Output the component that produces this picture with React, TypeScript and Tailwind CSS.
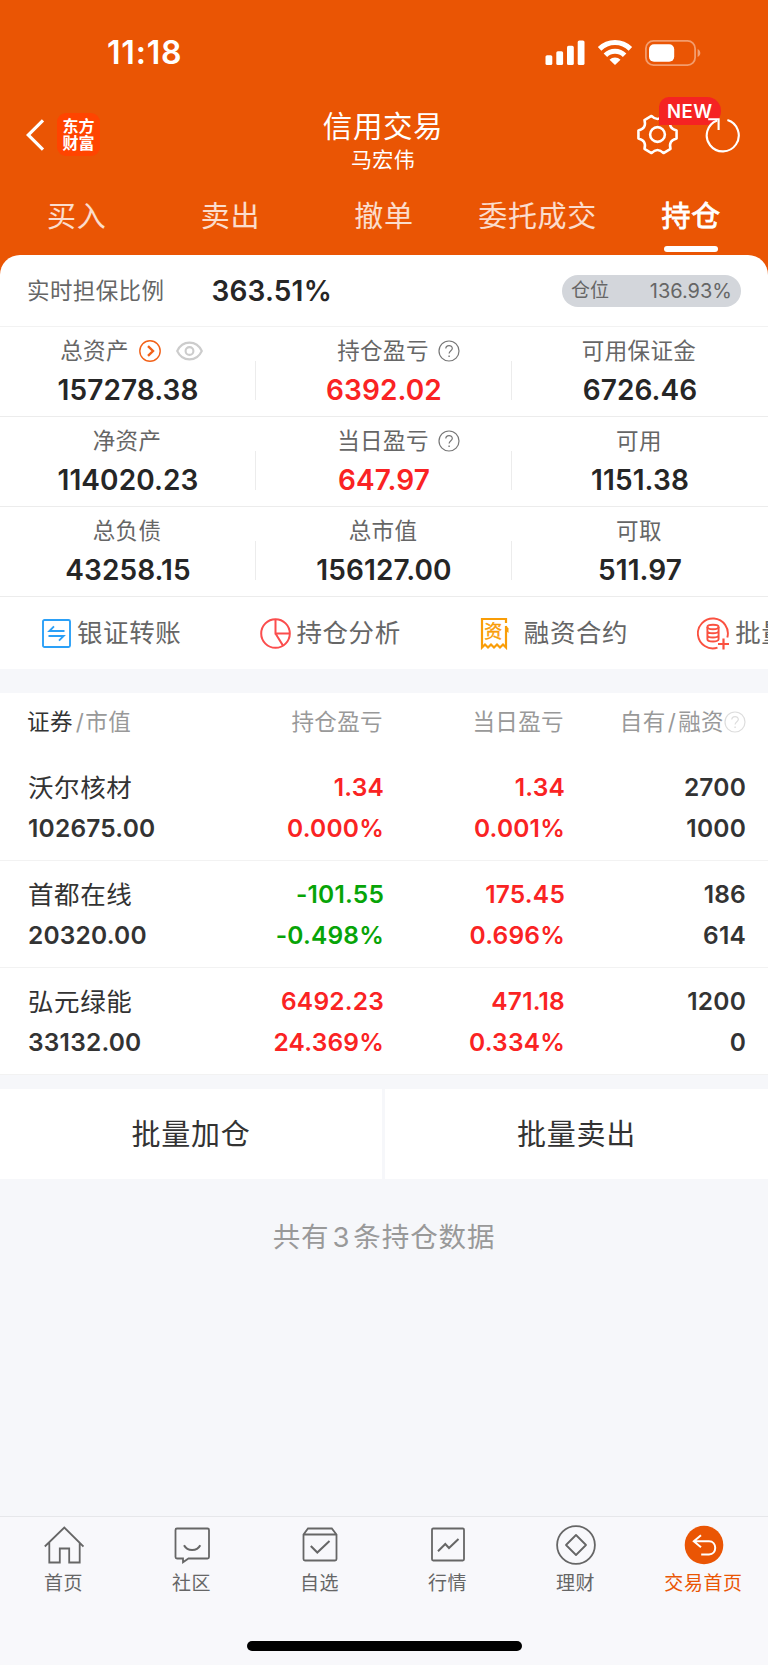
import clsx from "clsx"
import type { ReactNode } from "react"

const tabs = ["买入", "卖出", "撤单", "委托成交", "持仓"]

const summary = [
  [
    { label: "总资产", value: "157278.38", extra: "asset" },
    { label: "持仓盈亏", value: "6392.02", extra: "help", red: true },
    { label: "可用保证金", value: "6726.46" },
  ],
  [
    { label: "净资产", value: "114020.23" },
    { label: "当日盈亏", value: "647.97", extra: "help", red: true },
    { label: "可用", value: "1151.38" },
  ],
  [
    { label: "总负债", value: "43258.15" },
    { label: "总市值", value: "156127.00" },
    { label: "可取", value: "511.97" },
  ],
]

const holdings = [
  { name: "沃尔核材", value: "102675.00", profit: "1.34", profitRate: "0.000%", day: "1.34", dayRate: "0.001%", own: "2700", margin: "1000" },
  { name: "首都在线", value: "20320.00", profit: "-101.55", profitRate: "-0.498%", day: "175.45", dayRate: "0.696%", own: "186", margin: "614" },
  { name: "弘元绿能", value: "33132.00", profit: "6492.23", profitRate: "24.369%", day: "471.18", dayRate: "0.334%", own: "1200", margin: "0" },
]

function HelpIcon({ className }: { className?: string }) {
  return (
    <svg className={clsx("size-[22px] shrink-0", className)} viewBox="0 0 22 22" fill="none" stroke="currentColor" strokeWidth="1.2">
      <circle cx="11" cy="11" r="10" />
      <path d="M7.8 8.6c0-4 6.5-4 6.5-.2 0 2.3-3.2 2.3-3.2 5.2" />
      <path d="M11.1 15.4v1.5" strokeWidth="1.4" />
    </svg>
  )
}

function StatusBar() {
  return (
    <div className="flex h-[105px] items-center justify-between pr-[67px] pl-[107px]">
      <span className="text-[32px] font-semibold tracking-[0.8px]">11:18</span>
      <div className="flex items-center">
        <svg className="h-[26px] w-[40px]" viewBox="0 0 40 26" fill="currentColor">
          <rect x="0.5" y="15.2" width="6.8" height="9.8" rx="1.6" />
          <rect x="11.3" y="11.2" width="6.8" height="13.8" rx="1.6" />
          <rect x="22" y="5.8" width="6.8" height="19.2" rx="1.6" />
          <rect x="32.7" y="0.5" width="6.8" height="24.5" rx="1.6" />
        </svg>
        <svg className="ml-3 h-[26px] w-[36px]" viewBox="0 0 36 26" fill="none" stroke="currentColor" strokeWidth="5">
          <path d="M2.6 8.9a22 22 0 0 1 30.8 0" />
          <path d="M8.4 15.2a13.6 13.6 0 0 1 19.2 0" />
          <path d="M18 25l-5.5-5.2a7.6 7.6 0 0 1 11 0z" fill="currentColor" stroke="none" />
        </svg>
        <svg className="ml-3 h-[26px] w-[56px]" viewBox="0 0 56 26" fill="none">
          <rect x="0.9" y="0.9" width="49.2" height="24.2" rx="7.6" stroke="currentColor" strokeOpacity="0.42" strokeWidth="1.8" />
          <rect x="4" y="4.2" width="25.2" height="17.6" rx="5" fill="currentColor" />
          <path d="M52.6 8.9c3.6 1.7 3.6 6.5 0 8.2z" fill="currentColor" fillOpacity="0.45" />
        </svg>
      </div>
    </div>
  )
}

function TitleBar() {
  return (
    <div className="flex h-[75px] items-start">
      <div className="flex w-[255px] items-center pt-[8px] pl-[26px]">
        <svg className="h-[32px] w-[19px]" viewBox="0 0 19 32" fill="none" stroke="currentColor" strokeWidth="3.2">
          <path d="M17 1.4L2.2 16 17 30.6" />
        </svg>
        <div className="ml-3 flex size-[43px] flex-col items-center justify-center rounded-[9px] bg-[#ff4400] text-[16px] leading-[17px] font-bold">
          <span>东方</span>
          <span>财富</span>
        </div>
      </div>
      <div className="flex flex-1 flex-col items-center pt-px">
        <span className="text-[29.5px] leading-[40px] tracking-[0.6px]">信用交易</span>
        <span className="text-[21px] leading-[27px] tracking-[0.4px]">马宏伟</span>
      </div>
      <div className="flex w-[257px] items-center justify-end pt-[9px] pr-[27px]">
        <div className="relative">
          <svg className="size-[41px]" viewBox="0 0 40 40" fill="none" stroke="currentColor" strokeWidth="2.5" strokeLinejoin="round">
            <path d="M38.6 16.05V23.95Q30.4 26 32.7 34.1L25.9 38.1Q20 32 14.1 38.1L7.3 34.1Q9.6 26 1.4 23.95V16.05Q9.6 14 7.3 5.9L14.1 1.9Q20 8 25.9 1.9L32.7 5.9Q30.4 14 38.6 16.05Z" />
            <circle cx="20" cy="20" r="7.2" />
          </svg>
          <span className="absolute bottom-[30px] left-[22px] h-[28px] w-[62px] rounded-tl-[10px] rounded-r-[14px] bg-[#f52323] pl-[8px] text-[18.5px] leading-[28px] font-semibold tracking-[0.5px]">
            NEW
          </span>
        </div>
        <svg className="relative ml-[27px] h-[36px] w-[36px]" viewBox="0 0 36 36" fill="none" stroke="currentColor" strokeWidth="2.1">
          <path d="M22.4 3.1A16 16 0 1 1 12.2 3.4" />
          <path d="M3.2 2.2H13.6V13" />
        </svg>
      </div>
    </div>
  )
}

function Header() {
  return (
    <header className="h-[275px] bg-[#ea5504] text-white">
      <StatusBar />
      <TitleBar />
      <nav className="grid grid-cols-5">
        {tabs.map((tab) => {
          const active = tab === "持仓"
          return (
            <div key={tab} className="flex flex-col items-center pt-[7px]">
              <span
                className={clsx(
                  "text-[29px] leading-[59px] tracking-[0.7px]",
                  active ? "[-webkit-text-stroke:0.8px_white]" : "text-white/80"
                )}
              >
                {tab}
              </span>
              {active && <span className="h-[6px] w-[54px] rounded-full bg-white" />}
            </div>
          )
        })}
      </nav>
    </header>
  )
}

function Summary() {
  return (
    <section className="-mt-5 rounded-t-[20px] bg-white">
      <div className="flex h-[72px] items-center border-b border-[#f2f2f2] pr-[27px] pl-[27px]">
        <span className="text-[22.5px] tracking-[0.4px] text-[#666]">实时担保比例</span>
        <span className="ml-[47px] text-[28px] font-semibold tracking-[0.2px] text-[#262626]">363.51%</span>
        <div className="ml-auto flex h-[32px] w-[179px] items-center justify-between rounded-full bg-[#d3d6db] pr-[9px] pl-[9px] text-[#666]">
          <span className="pt-px text-[19px]">仓位</span>
          <span className="text-[20px]">136.93%</span>
        </div>
      </div>
      {summary.map((row, i) => (
        <div key={i} className="grid h-[90px] grid-cols-3 border-b border-[#ececec]">
          {row.map((cell, j) => (
            <div key={cell.label} className="relative flex flex-col items-center pt-[6px]">
              <div
                className={clsx(
                  "flex h-[36px] items-center pr-[2px] text-[22.5px] tracking-[0.4px] text-[#666]",
                  cell.extra === "asset" && "pl-[9px]"
                )}
              >
                <span>{cell.label}</span>
                {cell.extra === "asset" && (
                  <>
                    <svg className="ml-[10px] size-[22px]" viewBox="0 0 22 22" fill="none" stroke="#f26118">
                      <circle cx="11" cy="11" r="10.2" strokeWidth="1.4" />
                      <path d="M9 6.2l5 4.8-5 4.8" strokeWidth="2.4" />
                    </svg>
                    <svg className="ml-[15px] h-[20px] w-[27px]" viewBox="0 0 27 20" fill="none" stroke="#ccc" strokeWidth="2.1">
                      <path d="M1.2 10C3.7 4.6 8 1.6 13.5 1.6S23.3 4.6 25.8 10c-2.5 5.4-6.8 8.4-12.3 8.4S3.7 15.4 1.2 10z" />
                      <circle cx="13.5" cy="10" r="3.9" />
                    </svg>
                  </>
                )}
                {cell.extra === "help" && <HelpIcon className="-mr-[31px] ml-[9px] text-[#777]" />}
              </div>
              <span
                className={clsx(
                  "text-[28px] leading-[42px] font-semibold tracking-[0.1px]",
                  cell.red ? "text-[#fa2323]" : "text-[#262626]"
                )}
              >
                {cell.value}
              </span>
              {j < 2 && <span className="absolute top-[34px] right-0 h-[39px] w-px bg-[#ececec]" />}
            </div>
          ))}
        </div>
      ))}
    </section>
  )
}

function Shortcut({ icon, label, className }: { icon: ReactNode; label: string; className?: string }) {
  return (
    <div className={clsx("flex shrink-0 items-center text-[25.5px] tracking-[0.6px] text-[#666]", className)}>
      {icon}
      <span className="pt-px whitespace-nowrap">{label}</span>
    </div>
  )
}

function Shortcuts() {
  return (
    <section className="flex h-[72px] items-center overflow-hidden bg-white pl-[42px]">
      <Shortcut
        label="银证转账"
        icon={
          <svg className="mr-[6px] size-[29px]" viewBox="0 0 29 29" fill="none" stroke="#2ba0f7" strokeWidth="1.9">
            <rect x="1" y="1" width="27" height="27" rx="1.5" />
            <path d="M22.5 12H7.4L12 7.4M6.5 17H21.6L17 21.6" />
          </svg>
        }
      />
      <Shortcut
        label="持仓分析"
        className="ml-[79px]"
        icon={
          <svg className="mr-[5px] size-[31px]" viewBox="0 0 31 31" fill="none" stroke="#fb4d4d" strokeWidth="2">
            <circle cx="15.5" cy="15.5" r="14.3" />
            <path d="M15.5 1.2V15.5H29.8M15.5 15.5L23 27.6" />
          </svg>
        }
      />
      <Shortcut
        label="融资合约"
        className="ml-[79px]"
        icon={
          <span className="relative mr-[15px] flex h-[33px] w-[29px] justify-center">
            <svg className="absolute inset-0 h-[33px] w-[29px]" viewBox="0 0 29 33" fill="none" stroke="#f99d07" strokeWidth="2.2">
              <path d="M26 6V2H2v28.5l3-3 3 3 3-3 3 3 3-3 3 3 3-3L26 30.5V9" />
              <path d="M26 8.5l2.5 3V16L25 13z" fill="#f99d07" stroke="none" />
            </svg>
            <span className="pr-[2px] text-[18px] leading-[29px] tracking-normal text-[#f99d07] [-webkit-text-stroke:0.4px_#f99d07]">资</span>
          </span>
        }
      />
      <Shortcut
        label="批量加仓"
        className="ml-[69px]"
        icon={
          <svg className="mr-[5px] h-[33px] w-[33px]" viewBox="0 0 33 33" fill="none" stroke="#fa5140" strokeWidth="1.9">
            <path d="M20.5 30.7A15 15 0 1 1 30.3 20.5" />
            <ellipse cx="16" cy="10" rx="5.6" ry="2.2" />
            <path d="M10.4 10v12.2c0 3 11.2 3 11.2 0V10M10.4 14c0 3 11.2 3 11.2 0M10.4 18.2c0 3 11.2 3 11.2 0" />
            <path d="M26.5 21.5v11M21 27h11" strokeWidth="2.2" />
          </svg>
        }
      />
    </section>
  )
}

function Holdings() {
  return (
    <section className="mt-6 bg-white">
      <div className="flex h-[61px] items-center pr-[22px] pb-[3px] pl-[27px] text-[22.5px] tracking-[0.4px] text-[#999]">
        <div className="w-[177px]">
          <span className="text-[#333]">证券</span>
          <span className="pr-px pl-[3px]">/</span>市值
        </div>
        <div className="w-[179px] text-right">持仓盈亏</div>
        <div className="w-[181px] text-right">当日盈亏</div>
        <div className="flex flex-1 items-center justify-end whitespace-nowrap">
          自有<span className="px-[2px]">/</span>融资
          <HelpIcon className="text-[#ddd]" />
        </div>
      </div>
      {holdings.map((item) => (
        <div
          key={item.name}
          className="flex h-[107px] border-b border-[#f2f2f2] pt-[13px] pr-[22px] pl-[28px] text-[24.5px] leading-[41px] font-semibold tracking-[0.2px] text-[#333]"
        >
          <div className="flex w-[176px] flex-col">
            <span className="text-[25.5px] font-normal tracking-[0.6px]">{item.name}</span>
            <span>{item.value}</span>
          </div>
          <div className={clsx("flex w-[180px] flex-col text-right", item.profit.startsWith("-") ? "text-[#07a407]" : "text-[#fa2323]")}>
            <span>{item.profit}</span>
            <span>{item.profitRate}</span>
          </div>
          <div className="flex w-[181px] flex-col text-right text-[#fa2323]">
            <span>{item.day}</span>
            <span>{item.dayRate}</span>
          </div>
          <div className="flex flex-1 flex-col text-right">
            <span>{item.own}</span>
            <span>{item.margin}</span>
          </div>
        </div>
      ))}
    </section>
  )
}

const iconClass = "size-[40px]"

const bottomNav = [
  {
    name: "首页",
    icon: (
      <svg className={iconClass} viewBox="0 0 40 40" fill="none" stroke="currentColor" strokeWidth="1.8">
        <path d="M.8 21.5L20.3 2.5 39.5 21.5M5.3 17.5V37.5H15.8V23.5H25.2V37.5H35.7V17.5" />
      </svg>
    ),
  },
  {
    name: "社区",
    icon: (
      <svg className={iconClass} viewBox="0 0 40 40" fill="none" stroke="currentColor" strokeWidth="1.8">
        <path d="M5 3.5H35.5a1.5 1.5 0 0 1 1.5 1.5V32a1.5 1.5 0 0 1-1.5 1.5H16.5L11 37.3V33.5H5A1.5 1.5 0 0 1 3.5 32V5A1.5 1.5 0 0 1 5 3.5z" />
        <path d="M12 20.2c3.5 6.4 12.8 6.4 16.3 0" strokeWidth="2" />
      </svg>
    ),
  },
  {
    name: "自选",
    icon: (
      <svg className={iconClass} viewBox="0 0 40 40" fill="none" stroke="currentColor" strokeWidth="1.8">
        <path d="M3.5 9.5L8 3.5H31.8L36.5 9.5V34a1.5 1.5 0 0 1-1.5 1.5H5A1.5 1.5 0 0 1 3.5 34zM3.5 9.5H36.5" />
        <path d="M10.8 21l6.5 6.5L29.5 16" strokeWidth="2" />
      </svg>
    ),
  },
  {
    name: "行情",
    icon: (
      <svg className={iconClass} viewBox="0 0 40 40" fill="none" stroke="currentColor" strokeWidth="1.8">
        <rect x="4" y="3.5" width="32" height="32" rx="1.2" />
        <path d="M10 26.2l7.3-7.2 3.7 4L30.5 14" strokeWidth="2" />
      </svg>
    ),
  },
  {
    name: "理财",
    icon: (
      <svg className={iconClass} viewBox="0 0 40 40" fill="none" stroke="currentColor" strokeWidth="1.8" strokeLinejoin="round">
        <circle cx="20" cy="20" r="18.9" />
        <path d="M20 10L30 20 20 30 10 20z" />
      </svg>
    ),
  },
  {
    name: "交易首页",
    active: true,
    icon: (
      <svg className={iconClass} viewBox="0 0 40 40" fill="none" stroke="white" strokeWidth="2">
        <circle cx="20" cy="20" r="19.3" fill="#ea5504" stroke="none" />
        <path d="M17 10.2L9.8 16.2 17 22.3M9.8 16.2H25c8.3 0 8.3 13.3 0 13.3H17.2" />
      </svg>
    ),
  },
]

function BottomNav() {
  return (
    <footer className="h-[149px] border-t border-[#e6e7ea] bg-[#f8f8fb]">
      <nav className="grid grid-cols-6 pt-[8px]">
        {bottomNav.map((item) => (
          <div key={item.name} className={clsx("flex flex-col items-center", item.active ? "text-[#ea5504]" : "text-[#666]")}>
            {item.icon}
            <span className="mt-[4px] pr-px text-[19px] leading-[29px] tracking-[0.6px]">{item.name}</span>
          </div>
        ))}
      </nav>
      <div className="mx-auto mt-[43px] h-[10px] w-[275px] rounded-full bg-black" />
    </footer>
  )
}

export default function App() {
  return (
    <div className="flex h-[1665px] w-[768px] flex-col overflow-hidden bg-[#f6f7fa] font-['Inter','Noto_Sans_CJK_SC',sans-serif]">
      <Header />
      <Summary />
      <Shortcuts />
      <Holdings />
      <div className="mt-[14px] grid h-[90px] grid-cols-[382px_1fr] gap-[3px] text-[29px] leading-[88px] tracking-[0.8px] text-[#333]">
        <div className="bg-white pt-[2px] text-center">批量加仓</div>
        <div className="bg-white pt-[2px] text-center">批量卖出</div>
      </div>
      <p className="mt-[37px] text-center text-[27.5px] leading-[42px] tracking-[0.9px] text-[#999]">
        共有<span className="px-[3px]">3</span>条持仓数据
      </p>
      <div className="mt-auto">
        <BottomNav />
      </div>
    </div>
  )
}
